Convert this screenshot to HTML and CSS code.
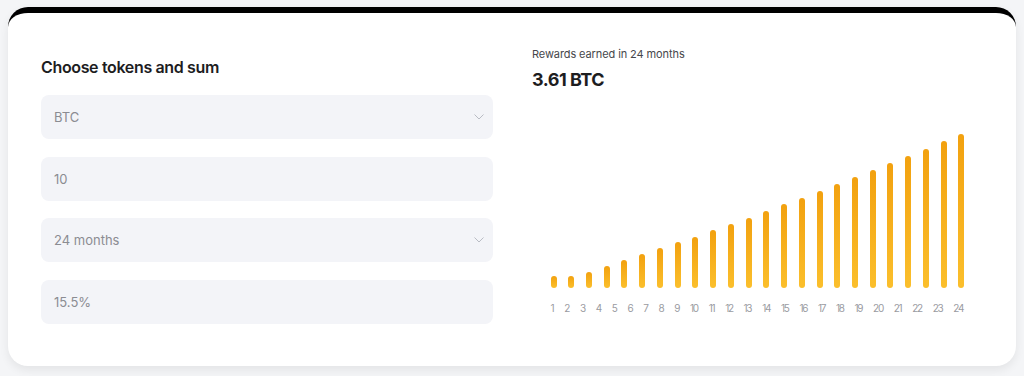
FILE: index.html
```html
<!DOCTYPE html>
<html lang="en">
<head>
<meta charset="utf-8">
<title>Rewards calculator</title>
<link rel="stylesheet" href="styles.css">
</head>
<body>
<div class="card">
  <div class="col-left">
    <h2 class="title">Choose tokens and sum</h2>
    <div class="fields">
      <div class="field">
        <span>BTC</span>
        <svg class="chev" width="10" height="6" viewBox="0 0 10 6"><path d="M0.5 0.5 L5 5 L9.5 0.5" fill="none" stroke="#b9bcc4" stroke-width="1"/></svg>
      </div>
      <div class="field"><span>10</span></div>
      <div class="field">
        <span>24 months</span>
        <svg class="chev" width="10" height="6" viewBox="0 0 10 6"><path d="M0.5 0.5 L5 5 L9.5 0.5" fill="none" stroke="#b9bcc4" stroke-width="1"/></svg>
      </div>
      <div class="field"><span>15.5%</span></div>
    </div>
  </div>
  <div class="col-right">
    <div class="label">Rewards earned in 24 months</div>
    <div class="value">3.61 BTC</div>
    <div class="bars">
      <i style="height:12px"></i><i style="height:12px"></i><i style="height:16px"></i><i style="height:22px"></i><i style="height:28px"></i><i style="height:34px"></i><i style="height:40px"></i><i style="height:46px"></i><i style="height:51px"></i><i style="height:58px"></i><i style="height:64px"></i><i style="height:70px"></i><i style="height:77px"></i><i style="height:84px"></i><i style="height:90px"></i><i style="height:97px"></i><i style="height:104px"></i><i style="height:111px"></i><i style="height:118px"></i><i style="height:125px"></i><i style="height:132px"></i><i style="height:139px"></i><i style="height:147px"></i><i style="height:154px"></i>
    </div>
    <div class="months">
      <span>1</span><span>2</span><span>3</span><span>4</span><span>5</span><span>6</span><span>7</span><span>8</span><span>9</span><span>10</span><span>11</span><span>12</span><span>13</span><span>14</span><span>15</span><span>16</span><span>17</span><span>18</span><span>19</span><span>20</span><span>21</span><span>22</span><span>23</span><span>24</span>
    </div>
  </div>
</div>
</body>
</html>
```
FILE: styles.css
```css
* { box-sizing: border-box; }
html, body { margin: 0; }
body {
  background: #f4f5f7;
  font-family: Inter, "Noto Sans", sans-serif;
  padding: 7px 8px 10px;
}
.card {
  height: 359px;
  background: #fff;
  border-top: 6px solid #000;
  border-radius: 20px;
  box-shadow: 0 4px 10px rgba(0, 0, 0, 0.07);
  display: grid;
  grid-template-columns: 452px 452px;
  column-gap: 39px;
  padding: 34px 32px 0 33px;
}
.col-left { padding-top: 10px; }
.title {
  margin: 0;
  font-size: 16px;
  line-height: 20px;
  font-weight: 600;
  color: #1d1d1f;
  letter-spacing: -0.35px;
}
.fields {
  margin-top: 18px;
  display: flex;
  flex-direction: column;
  gap: 17.5px;
}
.field {
  height: 44px;
  background: #f3f4f8;
  border-radius: 8px;
  display: flex;
  align-items: center;
  justify-content: space-between;
  padding: 0 9px 0 13px;
  font-size: 13px;
  color: #8b8c92;
}
.label {
  font-size: 11px;
  line-height: 14px;
  color: #46474b;
  letter-spacing: -0.1px;
}
.value {
  margin-top: 8px;
  font-size: 18px;
  line-height: 22px;
  font-weight: 700;
  color: #1d1d1f;
  letter-spacing: -0.5px;
}
.bars {
  margin: 43px 0 0 18.5px;
  width: 414px;
  height: 154px;
  display: flex;
  justify-content: space-between;
  align-items: flex-end;
}
.bars i {
  display: block;
  width: 6px;
  border-radius: 3px;
  background: linear-gradient(to bottom, #f2a10f, #fbbf2c);
}
.months {
  margin: 14px 0 0 18.5px;
  display: flex;
  gap: 10.9px;
  font-size: 10px;
  line-height: 12px;
  letter-spacing: -1.3px;
  color: #9a9ba1;
}
```
